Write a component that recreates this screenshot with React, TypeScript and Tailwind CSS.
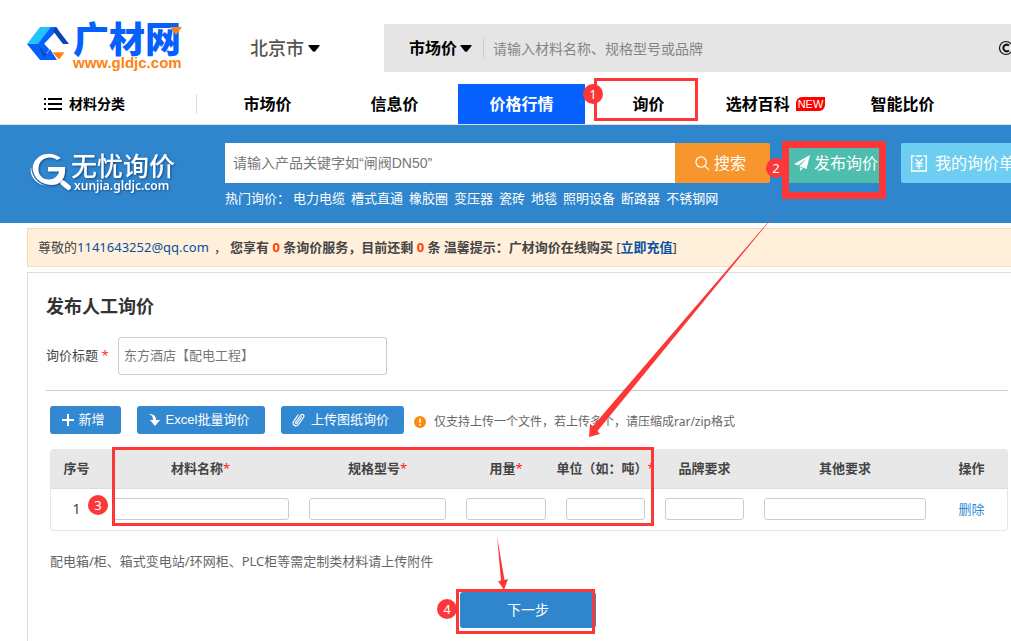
import React from "react";

const latinCjk = "font-['Noto_Sans','Noto_Sans_CJK_SC',sans-serif]";
const arialCjk = "font-['Liberation_Sans','Noto_Sans_CJK_SC',sans-serif]";

const hotWords = ["电力电缆", "槽式直通", "橡胶圈", "变压器", "瓷砖", "地毯", "照明设备", "断路器", "不锈钢网"];

const columns = [
  { label: "材料名称", required: true, width: "w-[197px]" },
  { label: "规格型号", required: true, width: "w-[157px]" },
  { label: "用量", required: true, width: "w-[100px]" },
  { label: "单位（如：吨）", required: true, width: "w-[99px]" },
  { label: "品牌要求", required: false, width: "w-[99px]" },
  { label: "其他要求", required: false, width: "w-[182px]" },
];

function Caret() {
  return (
    <svg width="12" height="7" viewBox="0 0 12 7" aria-hidden="true">
      <path d="M1 0h10q1 0 .5 1L7 6.4q-1 .8-2 0L.5 1Q0 0 1 0z" fill="#000" />
    </svg>
  );
}

function SiteLogo() {
  return (
    <a href="#" className="flex w-[158px] shrink-0 items-start gap-1">
      <svg className="mt-[3px] shrink-0" width="42" height="34" viewBox="0 0 42 34" aria-hidden="true">
        <path d="M13 0h13L12 17H0z" fill="#22c3fb" />
        <path d="M0 17h11l14 16H13z" fill="#0560fd" />
        <path d="M11 17h6l5 5-5 9z" fill="#0a46b0" />
        <path d="m17 31 6-9 7 11H15z" fill="#0560fd" />
        <path d="M24 0h5l2 2L17 17l5 6-4 4-7-10z" fill="#0560fd" />
        <path d="M26 4 29 0l13 17h-6z" fill="#0a46b0" />
        <path d="M25 25h13l-6 8z" fill="#ff7f10" stroke="#fff" strokeWidth=".6" />
      </svg>
      <span className="relative flex flex-col">
        <span className="h-[32px] text-[36px] leading-[32px] font-black whitespace-nowrap text-[#0560fd]">广材网</span>
        <span className="h-[14px] font-['Liberation_Sans',sans-serif] text-[15px] leading-[14px] font-bold whitespace-nowrap text-[#ff8210]">
          www.gldjc.com
        </span>
        <svg className="absolute top-[3px] right-0" width="12" height="8" viewBox="0 0 12 8" aria-hidden="true">
          <path d="M0 0h12L6 8z" fill="#ff8210" />
        </svg>
      </span>
    </a>
  );
}

function BannerLogo() {
  return (
    <a href="#" className="mt-[25px] ml-[30px] flex h-[44px] w-[195px] shrink-0 text-white [filter:drop-shadow(1px_1px_1px_rgba(0,30,90,.55))]">
      <svg className="mt-[3px] shrink-0" width="41" height="38" viewBox="0 0 41 38" aria-hidden="true">
        <path
          d="M31 5C25 .5 17-1 10 3 3 8 1 14 4 21c3 7 10 11 18 11 8 0 13-6 13-14v-4H18v4.500h11C28 23 24 26.500 19 26.500c-7 0-11-5-10.500-11C9 8 14 4.500 20 4.500c3 0 5 1 7 2.500z"
          fill="#fff"
        />
        <path d="M1 14c-2 9 5 18 16 19-9-2-15-9-16-19z" fill="#fff" />
        <path d="m33 30 5.500 4.500" stroke="#fff" strokeWidth="5" strokeLinecap="round" />
      </svg>
      <span className="flex flex-col whitespace-nowrap">
        <span className="text-[26px] leading-[32px] font-medium">无忧询价</span>
        <span className="pl-[3px] font-['Noto_Sans',sans-serif] text-[12px] leading-[8px] font-semibold">xunjia.gldjc.com</span>
      </span>
    </a>
  );
}

function Badge({ n, place }: { n: number; place: string }) {
  return (
    <span className={`absolute flex size-5 items-center justify-center rounded-full bg-[#fc3737] text-[13px] leading-5 text-white ${place}`}>
      {n}
    </span>
  );
}

function NavItem({ children, active }: { children: React.ReactNode; active?: boolean }) {
  return (
    <a
      href="#"
      className={`flex h-10 w-[127px] shrink-0 items-center justify-center gap-[6px] text-base font-bold whitespace-nowrap ${
        active ? "bg-[#0560fd] text-white" : "text-black"
      }`}
    >
      {children}
    </a>
  );
}

function Header() {
  return (
    <header>
      <div className="flex h-[84px] pt-6">
        <div className="w-[250px] shrink-0 pl-[27px]">
          <SiteLogo />
        </div>
        <button type="button" className="flex h-12 w-[134px] shrink-0 items-center gap-1 text-lg font-medium text-[#555]">
          北京市 <Caret />
        </button>
        <form className="flex h-12 flex-1 items-center overflow-hidden bg-[#e5e5e5]" onSubmit={(e) => e.preventDefault()}>
          <button type="button" className="flex w-[99px] shrink-0 items-center gap-[3px] pl-[25px] text-base font-bold text-black">
            市场价 <Caret />
          </button>
          <input
            aria-label="搜索材料"
            className="h-[22px] min-w-0 flex-1 border-l border-[#ccc] bg-transparent pl-[9px] text-sm outline-none placeholder:text-[#858585]"
            placeholder="请输入材料名称、规格型号或品牌"
          />
          <button type="button" aria-label="图片搜索" className="-mr-1 flex w-[17px] shrink-0">
            <svg width="17" height="16" viewBox="0 0 17 16" fill="none" stroke="#111" aria-hidden="true">
              <circle cx="8" cy="8" r="6.500" strokeWidth="1.200" />
              <path d="M11 5.300C8.500 3.800 5.300 5 5.300 8s3.200 4.200 5.700 2.700" strokeWidth="2" />
            </svg>
          </button>
        </form>
      </div>
      <nav className="flex h-[41px] overflow-hidden border-b border-[#ddd]">
        <a href="#" className="flex h-10 w-[196px] shrink-0 items-center gap-[7px] pl-11 text-sm font-bold text-black">
          <svg width="18" height="12" viewBox="0 0 18 12" fill="#000" aria-hidden="true">
            <path d="M0 0h2v2H0zM0 5h2v2H0zM0 10h2v2H0zM4 0h14v2H4zM4 5h14v2H4zM4 10h14v2H4z" />
          </svg>
          材料分类
        </a>
        <span className="mt-[10px] mr-[7px] h-5 w-px shrink-0 bg-[#ddd]" />
        <NavItem>市场价</NavItem>
        <NavItem>信息价</NavItem>
        <NavItem active>价格行情</NavItem>
        <NavItem>询价</NavItem>
        <NavItem>
          选材百科
          <span className="h-[14px] rounded-tl-md rounded-br-md bg-[#f00] px-[2px] font-['Liberation_Sans',sans-serif] text-[11px] leading-[14px] font-normal text-white">NEW</span>
        </NavItem>
        <NavItem>智能比价</NavItem>
      </nav>
    </header>
  );
}

function Banner() {
  return (
    <section className="flex h-[98px] overflow-hidden bg-[#2f86cd]">
      <BannerLogo />
      <div className="shrink-0 pt-[18px]">
        <form className="flex h-10" onSubmit={(e) => e.preventDefault()}>
          <input
            aria-label="产品关键字"
            className={`w-[450px] bg-white px-2 text-sm outline-none placeholder:text-[#777] ${arialCjk}`}
            placeholder="请输入产品关键字如“闸阀DN50”"
          />
          <button type="submit" className="flex w-[95px] items-center gap-1 rounded-r-[2px] bg-[#f8962e] pl-5 text-base text-white">
            <svg width="15" height="15" viewBox="0 0 16 16" fill="none" stroke="#fff" strokeWidth="1.300" aria-hidden="true">
              <circle cx="6.500" cy="6.500" r="5.500" />
              <path d="m10.500 10.500 4.500 4.500" />
            </svg>
            搜索
          </button>
        </form>
        <p className="flex gap-[6px] text-[13px] leading-[30px] whitespace-nowrap text-white">
          <span className="w-[62px]">热门询价：</span>
          {hotWords.map((w) => (
            <a href="#" key={w}>{w}</a>
          ))}
        </p>
      </div>
      <a href="#" className="mt-[18px] ml-[18px] flex h-10 w-[97px] shrink-0 items-center gap-1 rounded-[2px] bg-[#4dbdae] pl-[6px] text-base whitespace-nowrap text-white">
        <svg className="shrink-0" width="16" height="16" viewBox="0 0 16 16" fill="#fff" aria-hidden="true">
          <path d="M16 0 0 9l4 1.500L13.500 3 5.500 11v.2L12.500 14zM6 12.200V16l3-2.700z" />
        </svg>
        发布询价
      </a>
      <a href="#" className="mt-[18px] ml-[16px] flex h-10 w-[140px] shrink-0 items-center gap-2 rounded-[2px] bg-[#6dcef1] pl-[10px] text-base whitespace-nowrap text-white">
        <svg className="shrink-0" width="16" height="17" viewBox="0 0 16 17" fill="none" stroke="#fff" strokeWidth="1.300" aria-hidden="true">
          <path d="M3.500 1H.7v15h14.600V1h-2.800M5 1h6M4.500 4 8 8l3.500-4M8 8v6M4.500 8.500h7M4.500 11.200h7" />
        </svg>
        我的询价单
      </a>
    </section>
  );
}

function Notice() {
  return (
    <p className="mt-[5px] ml-[27px] flex h-[39px] items-center overflow-hidden border border-r-0 border-[#fbdcae] bg-[#ffefdb] pl-[10px] text-[13px] whitespace-pre text-[#444]">
      尊敬的<a href="#" className="w-[137px] text-[#0a50a0]">1141643252@qq.com</a>，
      <b className="pl-[3px]">您享有 <span className="text-[#ff4200]">0</span> 条询价服务，目前还剩 <span className="text-[#ff4200]">0</span> 条 温馨提示：广材询价在线购买 </b>
      [<a href="#" className="font-bold text-[#0a50a0]">立即充值</a>]
    </p>
  );
}

const blueButton = "flex h-7 items-center justify-center rounded-[3px] bg-[#3388d2] pr-1 text-[13px] text-white";

function InquiryForm() {
  return (
    <main className="mt-[5px] ml-[27px] flex-1 border-t border-l border-[#ddd] pr-[3px] pb-2 pl-[18px] text-[13px] text-[#444]">
      <h1 className="mt-[18px] text-lg leading-[30px] font-bold text-[#333]">发布人工询价</h1>
      <div className="mt-4 flex items-center">
        <label htmlFor="title" className="w-[72px]">
          询价标题 <span className="text-[#f33]">*</span>
        </label>
        <input
          id="title"
          className="h-[38px] w-[269px] rounded-[3px] border border-[#ccc] px-[5px] pb-[2px] outline-none placeholder:text-[#777]"
          placeholder="东方酒店【配电工程】"
        />
      </div>
      <hr className="mt-[15px] border-[#ccc]" />
      <div className="mt-[15px] flex items-center gap-4 pl-1">
        <button type="button" className={`${blueButton} w-[71px] gap-1`}>
          <svg width="12" height="12" viewBox="0 0 12 12" stroke="#fff" strokeWidth="2" aria-hidden="true">
            <path d="M6 0v12M0 6h12" />
          </svg>
          新增
        </button>
        <button type="button" className={`${blueButton} ${arialCjk} w-[128px] gap-[6px]`}>
          <svg width="11" height="12" viewBox="0 0 11 12" fill="#fff" aria-hidden="true">
            <path d="M0 0c5 0 7 2 7 6h4l-5 6-5-6h3c0-3-1-5-4-6z" />
          </svg>
          Excel批量询价
        </button>
        <button type="button" className={`${blueButton} w-[123px] gap-[6px]`}>
          <svg width="13" height="14" viewBox="0 0 13 14" fill="none" stroke="#fff" strokeWidth="1.200" strokeLinecap="round" aria-hidden="true">
            <path d="M9.500 4 5.300 10c-.8 1.200-2.300.2-1.500-1l4.700-6.500c1.600-2.200 4.500-.3 3 2l-5 7c-2.300 3.200-7 .2-4.800-3.200L6 2" />
          </svg>
          上传图纸询价
        </button>
        <p className="-ml-[6px] flex items-center gap-2 pt-[3px] text-xs text-[#666]">
          <svg width="12" height="12" viewBox="0 0 12 12" aria-hidden="true">
            <circle cx="6" cy="6" r="6" fill="#ff8a0c" />
            <path d="M5.200 2.500h1.600v4.500H5.200zM5.200 8h1.600v1.600H5.200z" fill="#fff" />
          </svg>
          仅支持上传一个文件，若上传多个，请压缩成rar/zip格式
        </p>
      </div>
      <div className="mt-[15px] ml-1 overflow-hidden rounded-[3px] border border-[#e6e6e6]">
        <table className="w-full table-fixed border-collapse">
          <thead>
            <tr className="h-[38px] border-b border-[#ddd] bg-[#e8e8e8]">
              <th className="w-[51px] font-bold">序号</th>
              {columns.map((c) => (
                <th key={c.label} className={`${c.width} font-bold whitespace-nowrap`}>
                  {c.label}
                  {c.required && <span className="font-normal text-[#f22]">*</span>}
                </th>
              ))}
              <th className="w-[71px] font-bold">操作</th>
            </tr>
          </thead>
          <tbody>
            <tr className="h-[42px] text-center">
              <td className="text-sm">1</td>
              {columns.map((c) => (
                <td key={c.label} className="px-[10px]">
                  <input aria-label={c.label} className="block h-[22px] w-full rounded-[3px] border border-[#ccc] px-1 outline-none" />
                </td>
              ))}
              <td>
                <a href="#" className="text-[#3388d2]">删除</a>
              </td>
            </tr>
          </tbody>
        </table>
      </div>
      <p className="mt-5 pl-1 leading-5 text-[#666]">配电箱/柜、箱式变电站/环网柜、PLC柜等需定制类材料请上传附件</p>
      <div className="mt-[21px] flex pr-[3px]">
        <button type="submit" className="ml-[414px] h-9 w-[136px] rounded-[3px] bg-[#2f86cd] text-sm text-white">下一步</button>
      </div>
    </main>
  );
}

function Annotations() {
  return (
    <div className="pointer-events-none">
      <div className="absolute top-[78px] left-[594px] h-[43px] w-[104px] border-3 border-[#fc3737]" />
      <div className="absolute top-[141px] left-[782px] h-[58px] w-[104px] border-7 border-[#fc3737]" />
      <div className="absolute top-[447px] left-[112px] h-[79px] w-[542px] border-3 border-[#fc3737]" />
      <div className="absolute top-[589px] left-[456px] h-[45px] w-[139px] border-3 border-[#fc3737]" />
      <Badge n={1} place="top-[84px] left-[583px]" />
      <Badge n={2} place="top-[158px] left-[766px]" />
      <Badge n={3} place="top-[495px] left-[88px]" />
      <Badge n={4} place="top-[599px] left-[437px]" />
      <svg className="absolute top-0 left-0" width="1011" height="641" viewBox="0 0 1011 641" fill="#fc3737" aria-hidden="true">
        <path d="M781 207 597.500 431 600 434 589 437 590 424 593 426z" />
        <path d="M497 536 501 580.500 498 581 504 590 508 579 504.500 580z" />
      </svg>
    </div>
  );
}

export default function App() {
  return (
    <div className={`relative flex min-h-screen flex-col overflow-hidden bg-white ${latinCjk}`}>
      <Header />
      <Banner />
      <Notice />
      <InquiryForm />
      <Annotations />
    </div>
  );
}
